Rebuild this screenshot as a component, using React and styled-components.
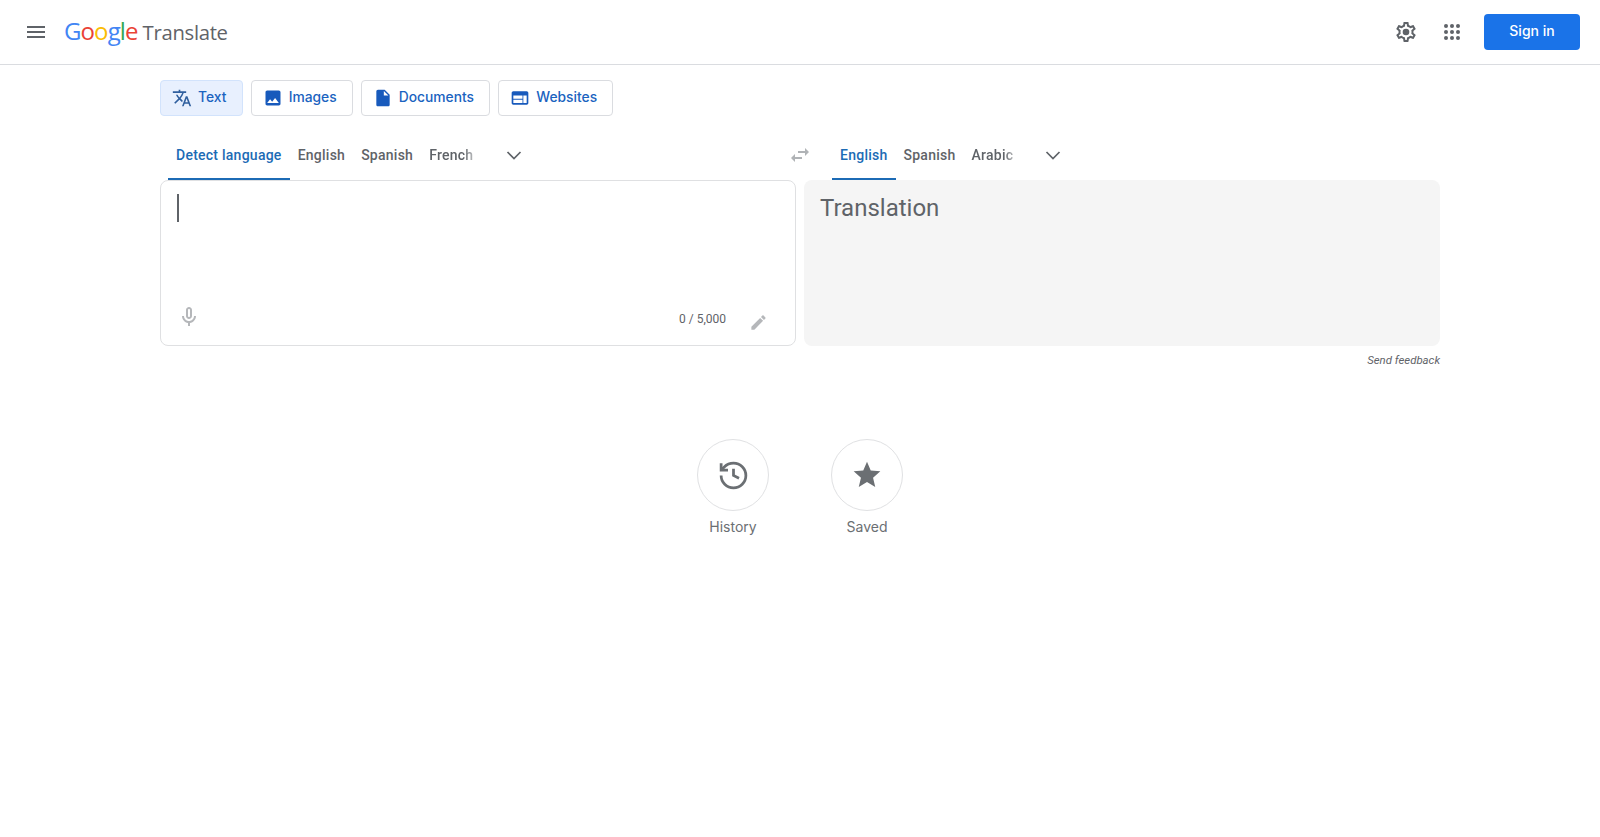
import styled, { createGlobalStyle } from "styled-components";

const GlobalStyle = createGlobalStyle`
  html, body {
    margin: 0;
    padding: 0;
    background: #fff;
    font-family: Roboto, "Liberation Sans", sans-serif;
    color: #5f6368;
  }
  * {
    box-sizing: border-box;
  }
`;

const icons = {
  menu: "M3 18h18v-2H3v2zm0-5h18v-2H3v2zm0-7v2h18V6H3z",
  translate:
    "M12.87 15.07l-2.54-2.51.03-.03c1.74-1.94 2.98-4.17 3.71-6.53H17V4h-7V2H8v2H1v1.99h11.17C11.5 7.92 10.44 9.75 9 11.35 8.07 10.32 7.3 9.19 6.69 8h-2c.73 1.63 1.73 3.17 2.98 4.56l-5.09 5.02L4 19l5-5 3.11 3.11.76-2.04zM18.5 10h-2L12 22h2l1.12-3h4.75L21 22h2l-4.5-12zm-2.62 7l1.62-4.33L19.12 17h-3.24z",
  image:
    "M21 19V5c0-1.1-.9-2-2-2H5c-1.1 0-2 .9-2 2v14c0 1.1.9 2 2 2h14c1.1 0 2-.9 2-2zM8.5 13.5l2.5 3.01L14.5 12l4.5 6H5l3.5-4.5z",
  doc: "M14 2H6c-1.1 0-1.99.9-1.99 2L4 20c0 1.1.89 2 1.99 2H18c1.1 0 2-.9 2-2V8l-6-6zm-1 7V3.5L18.5 9H13z",
  web: "M20 4H4c-1.1 0-1.99.9-1.99 2L2 18c0 1.1.9 2 2 2h16c1.1 0 2-.9 2-2V6c0-1.1-.9-2-2-2zm-5 14H4v-4h11v4zm0-5H4V9h11v4zm5 5h-4V9h4v9z",
  swap: "M6.99 11L3 15l3.99 4v-3H14v-2H6.99v-3zM21 9l-3.99-4v3H10v2h7.01v3L21 9z",
  mic: "M12 14c1.66 0 3-1.34 3-3V5c0-1.66-1.34-3-3-3S9 3.34 9 5v6c0 1.66 1.34 3 3 3zm-1-9c0-.55.45-1 1-1s1 .45 1 1v6c0 .55-.45 1-1 1s-1-.45-1-1V5zm6 6c0 2.76-2.24 5-5 5s-5-2.24-5-5H5c0 3.53 2.61 6.43 6 6.92V21h2v-3.08c3.39-.49 6-3.39 6-6.92h-2z",
  pencil:
    "M3 17.25V21h3.75L17.81 9.94l-3.75-3.75L3 17.25zM20.71 7.04c.39-.39.39-1.02 0-1.41l-2.34-2.34c-.39-.39-1.02-.39-1.41 0l-1.83 1.83 3.75 3.75 1.83-1.83z",
  star: "M12 17.27L18.18 21l-1.64-7.03L22 9.24l-7.19-.61L12 2 9.19 8.63 2 9.24l5.46 4.73L5.82 21z",
  gear: "M19.43 12.98c.04-.32.07-.64.07-.98 0-.34-.03-.66-.07-.98l2.11-1.65c.19-.15.24-.42.12-.64l-2-3.46c-.09-.16-.26-.25-.44-.25-.06 0-.12.01-.17.03l-2.49 1c-.52-.4-1.08-.73-1.69-.98l-.38-2.65C14.46 2.18 14.25 2 14 2h-4c-.25 0-.46.18-.49.42l-.38 2.65c-.61.25-1.17.59-1.69.98l-2.49-1c-.06-.02-.12-.03-.18-.03-.17 0-.34.09-.43.25l-2 3.46c-.13.22-.07.49.12.64l2.11 1.65c-.04.32-.07.65-.07.98 0 .33.03.66.07.98l-2.11 1.65c-.19.15-.24.42-.12.64l2 3.46c.09.16.26.25.44.25.06 0 .12-.01.17-.03l2.49-1c.52.4 1.08.73 1.69.98l.38 2.65c.03.24.24.42.49.42h4c.25 0 .46-.18.49-.42l.38-2.65c.61-.25 1.17-.59 1.69-.98l2.49 1c.06.02.12.03.18.03.17 0 .34-.09.43-.25l2-3.46c.12-.22.07-.49-.12-.64l-2.11-1.65zm-1.98-1.71c.04.31.05.52.05.73 0 .21-.02.43-.05.73l-.14 1.13.89.7 1.08.84-.7 1.21-1.27-.51-1.04-.42-.9.68c-.43.32-.84.56-1.25.73l-1.06.43-.16 1.13-.2 1.35h-1.4l-.19-1.35-.16-1.13-1.06-.43c-.43-.18-.83-.41-1.23-.71l-.91-.7-1.06.43-1.27.51-.7-1.21 1.08-.84.89-.7-.14-1.13c-.03-.31-.05-.54-.05-.74s.02-.43.05-.73l.14-1.13-.89-.7-1.08-.84.7-1.21 1.27.51 1.04.42.9-.68c.43-.32.84-.56 1.25-.73l1.06-.43.16-1.13.2-1.35h1.39l.19 1.35.16 1.13 1.06.43c.43.18.83.41 1.23.71l.91.7 1.06-.43 1.27-.51.7 1.21-1.07.85-.89.7.14 1.13z",
};

function Icon({ name, size = 24, color = "currentColor" }) {
  return (
    <svg width={size} height={size} viewBox="0 0 24 24" fill={color}>
      <path d={icons[name]} />
    </svg>
  );
}

function GearIcon() {
  return (
    <svg width="24" height="24" viewBox="0 0 24 24" fill="#5f6368">
      <path d={icons.gear} />
      <circle cx="12" cy="12" r="3.3" />
    </svg>
  );
}

function AppsIcon() {
  const spots = [6, 12, 18];
  return (
    <svg width="24" height="24" viewBox="0 0 24 24" fill="#5f6368">
      {spots.map((y) =>
        spots.map((x) => <circle key={`${x}-${y}`} cx={x} cy={y} r="2" />)
      )}
    </svg>
  );
}

function ChevronIcon() {
  return (
    <svg
      width="24"
      height="24"
      viewBox="0 0 24 24"
      fill="none"
      stroke="#5f6368"
      strokeWidth="1.7"
    >
      <path d="M5.5 9l6.5 6.5L18.5 9" />
    </svg>
  );
}

function HistoryIcon() {
  return (
    <svg
      width="33"
      height="33"
      viewBox="0 0 24 24"
      fill="none"
      stroke="#6b6f73"
      strokeWidth="2"
    >
      <path d="M3 12a9 9 0 1 0 9-9 9.75 9.75 0 0 0-6.74 2.74L3 8" />
      <path d="M3 3v5h5" />
      <path d="M12 7v5l4 2" />
    </svg>
  );
}

const TopBar = styled.header`
  display: flex;
  align-items: center;
  height: 65px;
  padding: 0 20px 0 24px;
  border-bottom: 1px solid #dadce0;
`;

const Logo = styled.div`
  display: flex;
  align-items: baseline;
  margin: -3px 0 0 16px;
  font-family: "Open Sans", sans-serif;
  font-size: 24px;
  letter-spacing: -0.9px;
`;

const Letter = styled.span`
  color: ${(p) => p.$color};
`;

const ProductName = styled.span`
  margin-left: 5px;
  font-family: "Open Sans", sans-serif;
  font-size: 20.3px;
  letter-spacing: -0.3px;
  color: #5f6368;
`;

const TopActions = styled.div`
  display: flex;
  align-items: center;
  gap: 20px;
  margin-left: auto;
`;

const TopIcons = styled.div`
  display: flex;
  gap: 22px;
`;

const TopIcon = styled.span`
  display: flex;
  width: 24px;
  height: 24px;
`;

const SignIn = styled.button`
  width: 96px;
  height: 36px;
  padding: 0 0 3px;
  border: none;
  border-radius: 4px;
  background: #1a73e8;
  color: #fff;
  font-family: Inter, sans-serif;
  font-size: 14px;
  font-weight: 500;
`;

const Main = styled.main`
  padding: 15px 160px 0;
`;

const ModeRow = styled.nav`
  display: flex;
  gap: 8px;
`;

const ModeButton = styled.button`
  display: flex;
  align-items: center;
  gap: 6px;
  height: 36px;
  padding: 0 15.25px 0 11px;
  border: 1px solid ${(p) => (p.$active ? "#d2e3fc" : "#dadce0")};
  border-radius: 4px;
  background: ${(p) => (p.$active ? "#e8f0fe" : "#fff")};
  color: #1a63c0;
  font-family: Inter, sans-serif;
  font-size: 13.8px;
  font-weight: 500;
`;

const ModeLabel = styled.span`
  margin-bottom: 2px;
`;

const LanguageRow = styled.div`
  display: grid;
  grid-template-columns: 1fr 48px 1fr;
  height: 44px;
  margin-top: 20px;
`;

const LanguageTabs = styled.div`
  display: flex;
  align-items: stretch;
  padding-left: 8px;
`;

const LanguageTab = styled.span`
  display: flex;
  align-items: center;
  padding: 0 8px 5px;
  border-bottom: 2px solid ${(p) => (p.$active ? "#1c6bb5" : "transparent")};
  color: ${(p) => (p.$active ? "#1c6bb5" : "#5f6368")};
  font-size: 14px;
  font-weight: 500;
  letter-spacing: 0.25px;
  ${(p) =>
    p.$fade &&
    "mask-image: linear-gradient(to right, #000 70%, transparent 100%);"}
`;

const MoreLanguages = styled.span`
  display: flex;
  align-items: center;
  margin-left: ${(p) => p.$offset}px;
  padding-bottom: 6px;
`;

const SwapSlot = styled.span`
  display: flex;
  align-items: center;
  justify-content: center;
  padding-bottom: 6px;
`;

const Panels = styled.section`
  display: grid;
  grid-template-columns: 1fr 1fr;
  gap: 8px;
  height: 166px;
`;

const SourcePanel = styled.div`
  display: flex;
  flex-direction: column;
  justify-content: space-between;
  padding: 13px 27px 13px 16px;
  border: 1px solid #dfe0e2;
  border-radius: 8px;
`;

const Caret = styled.span`
  display: block;
  width: 2px;
  height: 28px;
  background: #5f6368;
`;

const SourceFooter = styled.div`
  display: flex;
  align-items: flex-start;
  gap: 22px;
`;

const Counter = styled.span`
  margin: 6px 0 0 auto;
  font-size: 12px;
  line-height: 16px;
  color: #5f6368;
`;

const PencilSlot = styled.span`
  display: flex;
  width: 20px;
  justify-content: center;
  margin-top: 8px;
`;

const TargetPanel = styled.div`
  padding: 12px 16px;
  border-radius: 8px;
  background: #f5f5f5;
  font-size: 24px;
  line-height: 32px;
  color: #5f6368;
`;

const FeedbackRow = styled.div`
  padding: 6px 0 1px;
  text-align: right;
  font-size: 11.4px;
  line-height: 16px;
  font-style: italic;
  color: #5f6368;
`;

const Shortcuts = styled.div`
  display: flex;
  justify-content: center;
  gap: 62px;
  margin-top: 70px;
`;

const Shortcut = styled.div`
  display: flex;
  flex-direction: column;
  align-items: center;
  width: 72px;
`;

const ShortcutCircle = styled.span`
  display: flex;
  align-items: center;
  justify-content: center;
  width: 72px;
  height: 72px;
  border: 1px solid #e0e1e3;
  border-radius: 50%;
`;

const ShortcutLabel = styled.span`
  margin-top: 6px;
  font-family: Inter, sans-serif;
  font-size: 14px;
  line-height: 20px;
  color: #6b6f73;
`;

const modes = [
  { label: "Text", icon: "translate", color: "#2f5f9e", active: true },
  { label: "Images", icon: "image", color: "#185abc" },
  { label: "Documents", icon: "doc", color: "#185abc" },
  { label: "Websites", icon: "web", color: "#185abc" },
];

const logoLetters = [
  ["G", "#4285f4"],
  ["o", "#ea4335"],
  ["o", "#fbbc04"],
  ["g", "#4285f4"],
  ["l", "#34a853"],
  ["e", "#ea4335"],
];

export default function App() {
  return (
    <>
      <GlobalStyle />
      <TopBar>
        <Icon name="menu" color="#5f6368" />
        <Logo>
          {logoLetters.map(([letter, color], i) => (
            <Letter key={i} $color={color}>
              {letter}
            </Letter>
          ))}
          <ProductName>Translate</ProductName>
        </Logo>
        <TopActions>
          <TopIcons>
            <TopIcon>
              <GearIcon />
            </TopIcon>
            <TopIcon>
              <AppsIcon />
            </TopIcon>
          </TopIcons>
          <SignIn>Sign in</SignIn>
        </TopActions>
      </TopBar>
      <Main>
        <ModeRow>
          {modes.map((mode) => (
            <ModeButton key={mode.label} $active={mode.active}>
              <Icon name={mode.icon} size={20} color={mode.color} />
              <ModeLabel>{mode.label}</ModeLabel>
            </ModeButton>
          ))}
        </ModeRow>
        <LanguageRow>
          <LanguageTabs>
            <LanguageTab $active>Detect language</LanguageTab>
            <LanguageTab>English</LanguageTab>
            <LanguageTab>Spanish</LanguageTab>
            <LanguageTab $fade>French</LanguageTab>
            <MoreLanguages $offset={21}>
              <ChevronIcon />
            </MoreLanguages>
          </LanguageTabs>
          <SwapSlot>
            <Icon name="swap" color="#b0b3b6" />
          </SwapSlot>
          <LanguageTabs>
            <LanguageTab $active>English</LanguageTab>
            <LanguageTab>Spanish</LanguageTab>
            <LanguageTab $fade>Arabic</LanguageTab>
            <MoreLanguages $offset={20}>
              <ChevronIcon />
            </MoreLanguages>
          </LanguageTabs>
        </LanguageRow>
        <Panels>
          <SourcePanel>
            <Caret />
            <SourceFooter>
              <Icon name="mic" color="#b5b7ba" />
              <Counter>0 / 5,000</Counter>
              <PencilSlot>
                <Icon name="pencil" size={19} color="#b5b7ba" />
              </PencilSlot>
            </SourceFooter>
          </SourcePanel>
          <TargetPanel>Translation</TargetPanel>
        </Panels>
        <FeedbackRow>Send feedback</FeedbackRow>
        <Shortcuts>
          <Shortcut>
            <ShortcutCircle>
              <HistoryIcon />
            </ShortcutCircle>
            <ShortcutLabel>History</ShortcutLabel>
          </Shortcut>
          <Shortcut>
            <ShortcutCircle>
              <Icon name="star" size={32} color="#6b6f73" />
            </ShortcutCircle>
            <ShortcutLabel>Saved</ShortcutLabel>
          </Shortcut>
        </Shortcuts>
      </Main>
    </>
  );
}
